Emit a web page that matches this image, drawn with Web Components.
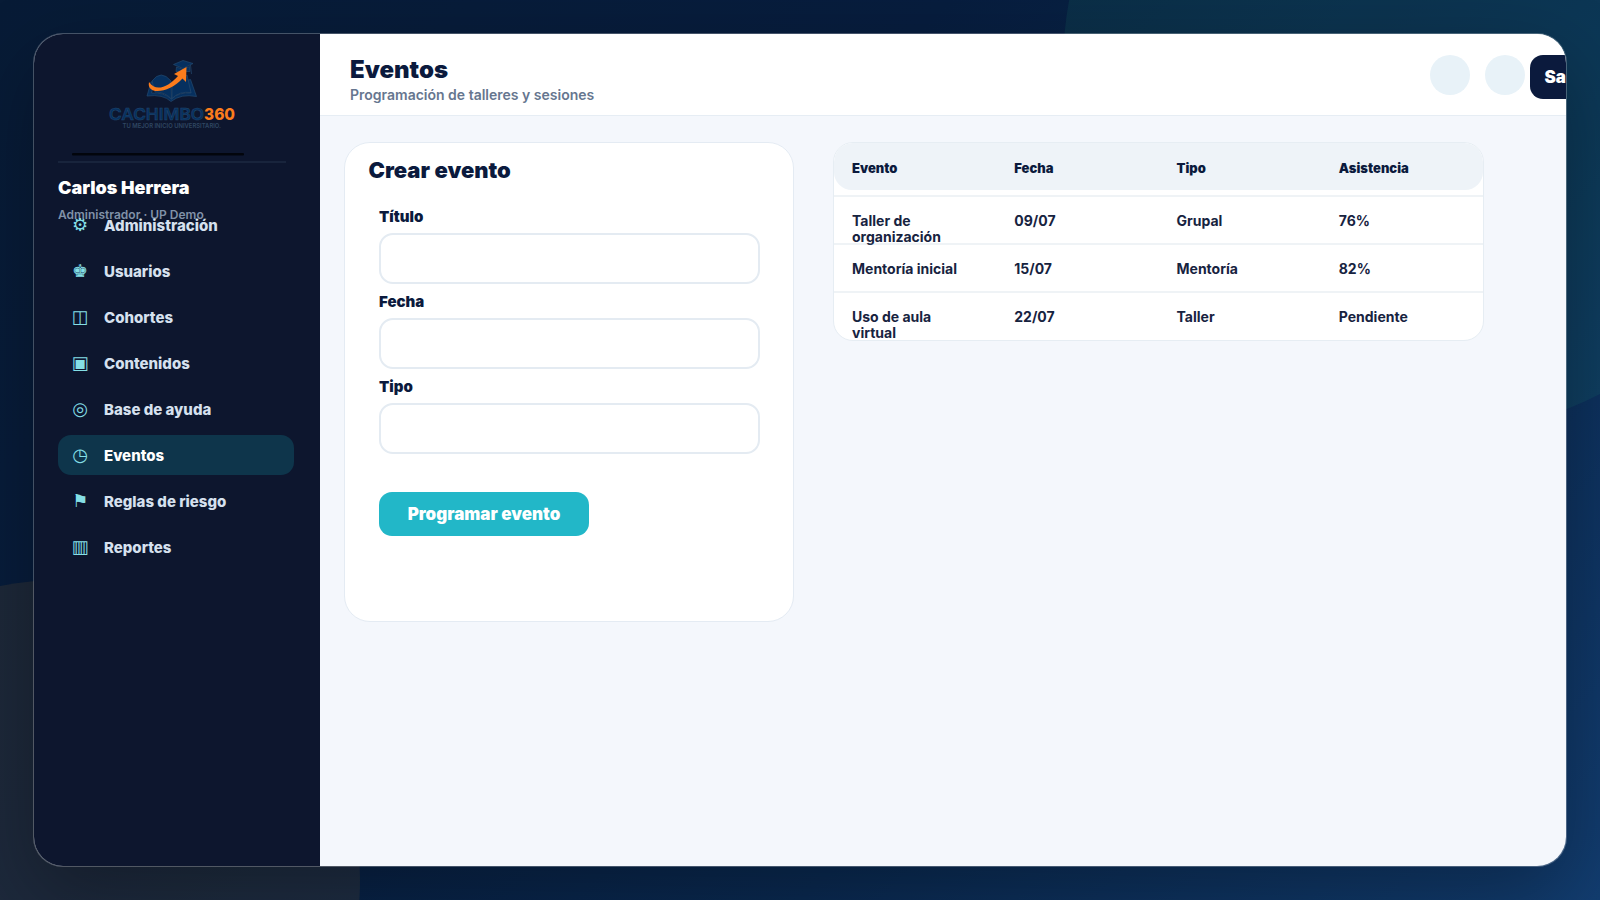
<!DOCTYPE html>
<html lang="es">
<head>
<meta charset="utf-8">
<title>Cachimbo360 – Eventos</title>
<style>
html,body{margin:0;height:100%;overflow:hidden}
body{font-family:Inter,"Liberation Sans",sans-serif;color:#0b1a3d}
</style>
</head>
<body>
<c-stage>
  <c-shell>
    <c-sidebar slot="side">
      <c-logo slot="logo"></c-logo>
      <c-user name="Carlos Herrera" role-text="Administrador · UP Demo" slot="user"></c-user>
      <c-nav-item icon="⚙">Administración</c-nav-item>
      <c-nav-item icon="♚">Usuarios</c-nav-item>
      <c-nav-item icon="◫">Cohortes</c-nav-item>
      <c-nav-item icon="▣">Contenidos</c-nav-item>
      <c-nav-item icon="◎">Base de ayuda</c-nav-item>
      <c-nav-item icon="◷" active>Eventos</c-nav-item>
      <c-nav-item icon="⚑">Reglas de riesgo</c-nav-item>
      <c-nav-item icon="▥">Reportes</c-nav-item>
    </c-sidebar>
    <c-topbar slot="top" heading="Eventos" sub="Programación de talleres y sesiones"></c-topbar>
    <c-form-card heading="Crear evento">
      <c-field label="Título"></c-field>
      <c-field label="Fecha"></c-field>
      <c-field label="Tipo"></c-field>
      <c-button slot="action">Programar evento</c-button>
    </c-form-card>
    <c-table>
      <c-row head><span>Evento</span><span>Fecha</span><span>Tipo</span><span>Asistencia</span></c-row>
      <c-row><span>Taller de organización</span><span>09/07</span><span>Grupal</span><span>76%</span></c-row>
      <c-row><span>Mentoría inicial</span><span>15/07</span><span>Mentoría</span><span>82%</span></c-row>
      <c-row><span>Uso de aula virtual</span><span>22/07</span><span>Taller</span><span>Pendiente</span></c-row>
    </c-table>
  </c-shell>
</c-stage>
<script>
const define = (name, html) => customElements.define(name, class extends HTMLElement {
  constructor() {
    super();
    const a = k => this.getAttribute(k) || '';
    this.attachShadow({mode: 'open'}).innerHTML = typeof html === 'function' ? html(a) : html;
  }
});

define('c-stage', `<style>
:host{display:block;box-sizing:border-box;width:1600px;height:900px;padding:33px;position:relative;overflow:hidden;
 background:linear-gradient(135deg,#071b36 0%,#071d3e 38%,#0a2a52 68%,#123d70 100%)}
i{position:absolute;border-radius:50%}
.a{width:736px;height:736px;left:1063px;top:-301px;background:rgba(34,170,130,.11)}
.b{width:600px;height:600px;left:-240px;top:580px;background:rgba(245,160,40,.095)}
</style><i class="a"></i><i class="b"></i><slot></slot>`);

define('c-shell', `<style>
:host{display:grid;grid-template-columns:286px 1fr;box-sizing:border-box;width:1534px;height:834px;position:relative;
 border:1px solid rgba(255,255,255,.25);border-radius:30px;overflow:hidden;background:#f4f7fc;background-clip:padding-box;
 box-shadow:0 28px 80px rgba(0,0,0,.3)}
main{display:flex;flex-direction:column;min-width:0}
section{display:flex;align-items:flex-start;gap:39px;padding:26px 23.500px}
</style><slot name="side"></slot><main><slot name="top"></slot><section><slot></slot></section></main>`);

define('c-sidebar', `<style>
:host{display:flex;flex-direction:column;box-sizing:border-box;padding:24px 26px 24px 24px;background:#0d162e}
nav{display:flex;flex-direction:column;gap:6px}
</style><slot name="logo"></slot><slot name="user"></slot><nav><slot></slot></nav>`);

define('c-logo', `<style>
:host{display:block;width:228px;height:102.500px;border-bottom:2px solid #18243c}
svg{display:block}
text{font-family:Inter,sans-serif}
</style><svg width="228" height="102.500" viewBox="58 58 228 102.500">
<g fill="#06305f" stroke="#24496e" stroke-width=".7" stroke-linejoin="round">
<path d="M151 82 L147 96 Q163 94 171 101.500 Q181 93.500 196.500 96.500 L190.500 79.500 L187 80.500 L191 93 Q179 92 171.500 99 Q163 92 151.500 93 L155 81Z"/>
<path d="M152 81 Q161 69 171 81 L171.500 99 Q165 92 155 92Z"/>
<path d="M172 84 L187 75 L191 92.500 Q179 91 172 98.500Z"/>
<path d="M173.500 64.500 L183 60.500 L193 63.500 L183 68.500Z"/>
<path d="M176.500 67 L183 69.500 L189.500 66.500 L190 71.500 L176 71.500Z"/>
<path d="M190.500 65 L191.500 74" fill="none"/>
</g>
<path d="M149 82 C146 96 170 93 182.500 78.500 L186 82 L186.500 67 L174 74 L178 76 C168 87 156 92.500 149 82Z" fill="#fb7c1c"/>
<g font-weight="800" font-size="16.500">
<text x="109" y="119.700" textLength="95" lengthAdjust="spacingAndGlyphs" font-weight="600" fill="#06305f" stroke="#24496e" stroke-width=".5">CACHIMBO</text>
<text x="204" y="119.700" textLength="31" lengthAdjust="spacingAndGlyphs" fill="#fb7c1c">360</text></g>
<text x="122.500" y="128.400" font-size="6.500" font-weight="600" textLength="98.500" lengthAdjust="spacingAndGlyphs" fill="#2f4662">TU MEJOR INICIO UNIVERSITARIO.</text>
<rect x="72" y="153" width="172" height="2.500" rx="1" fill="#02050c"/>
</svg>`);

define('c-user', a => `<style>
:host{display:block;height:42.500px;white-space:nowrap}
b{display:block;margin-top:14px;font-size:18px;line-height:22px;font-weight:900;color:#fff}
small{display:block;margin-top:8.500px;font-size:12px;line-height:15px;font-weight:600;color:#8091a8}
</style><b>${a('name')}</b><small>${a('role-text')}</small>`);

define('c-nav-item', a => `<style>
:host{display:flex;align-items:center;box-sizing:border-box;width:236px;height:40px;padding:1px 0 0 13px;border-radius:13px;
 font-size:15px;font-weight:800;color:#d6e1ef;position:relative}
:host([active]){background:#0e354b;color:#fff}
i{font:400 18px/20px "DejaVu Sans",sans-serif;color:#84dfe6;width:18px;text-align:center;margin:-1px 15px 0 0}
</style><i>${a('icon')}</i><slot></slot>`);

define('c-topbar', a => `<style>
:host{display:flex;justify-content:space-between;box-sizing:border-box;height:82px;padding:21px 0 0 30px;background:#fff;border-bottom:1.500px solid #e6edf4}
h1{margin:0;font-size:24px;line-height:29px;font-weight:900}
p{margin:2px 0 0;font-size:14px;line-height:17px;font-weight:600;color:#66768f}
div{display:flex;width:136px}
i{flex:none;width:40px;height:40px;border-radius:50%;background:#e8f2f8;margin-right:15px}
i+i{margin-right:5px}
</style><header><h1>${a('heading')}</h1><p>${a('sub')}</p></header><div><i></i><i></i><c-button dark>Salir</c-button></div>`);

define('c-button', `<style>
:host{flex:none;display:flex;align-items:center;justify-content:center;box-sizing:border-box;width:210px;height:44px;border-radius:13px;
 background:#22b7c8;color:#fff;font-size:17px;font-weight:900}
:host([dark]){width:70px;background:#0b1a3d;justify-content:flex-start;padding-left:14.500px}
</style><slot></slot>`);

define('c-form-card', a => `<style>
:host{flex:none;display:block;box-sizing:border-box;width:450.500px;height:480px;padding:14px 34.500px 0;border:1.500px solid #e4ebf3;border-radius:26px;background:#fff}
h2{margin:0 0 23px -10.500px;font-size:22px;line-height:27px;font-weight:900}
footer{margin-top:40px}
</style><h2>${a('heading')}</h2><slot></slot><footer><slot name="action"></slot></footer>`);

define('c-field', a => `<style>
:host{display:block;height:85px}
:host(:last-of-type){height:75px}
label{display:block;font-size:15px;line-height:20px;font-weight:900}
input{display:block;box-sizing:border-box;width:381px;height:51px;margin:6px 0 0 -.5px;border:2px solid #e4ebf2;border-radius:14px;background:#fff;outline:none}
</style><label>${a('label')}</label><input>`);

define('c-table', `<style>
:host{flex:none;display:block;box-sizing:border-box;width:651px;height:199px;border:1.500px solid #e6edf3;border-radius:20px;background:#fff;overflow:hidden}
</style><slot></slot>`);

define('c-row', `<style>
:host{display:grid;grid-template-columns:repeat(4,1fr);box-sizing:border-box;height:48px;padding-top:16px;border-top:2px solid rgba(120,155,180,.12);
 font-size:14px;line-height:16.300px;font-weight:700;color:#17233f;position:relative}
:host([head]){height:47px;padding-top:17px;margin-bottom:5px;border:0;border-radius:18px;background:#eef3f8;font-size:13px;font-weight:900;color:#0b1a3d}
::slotted(span){padding:0 32px 0 18px}
</style><slot></slot>`);
</script>
</body>
</html>
